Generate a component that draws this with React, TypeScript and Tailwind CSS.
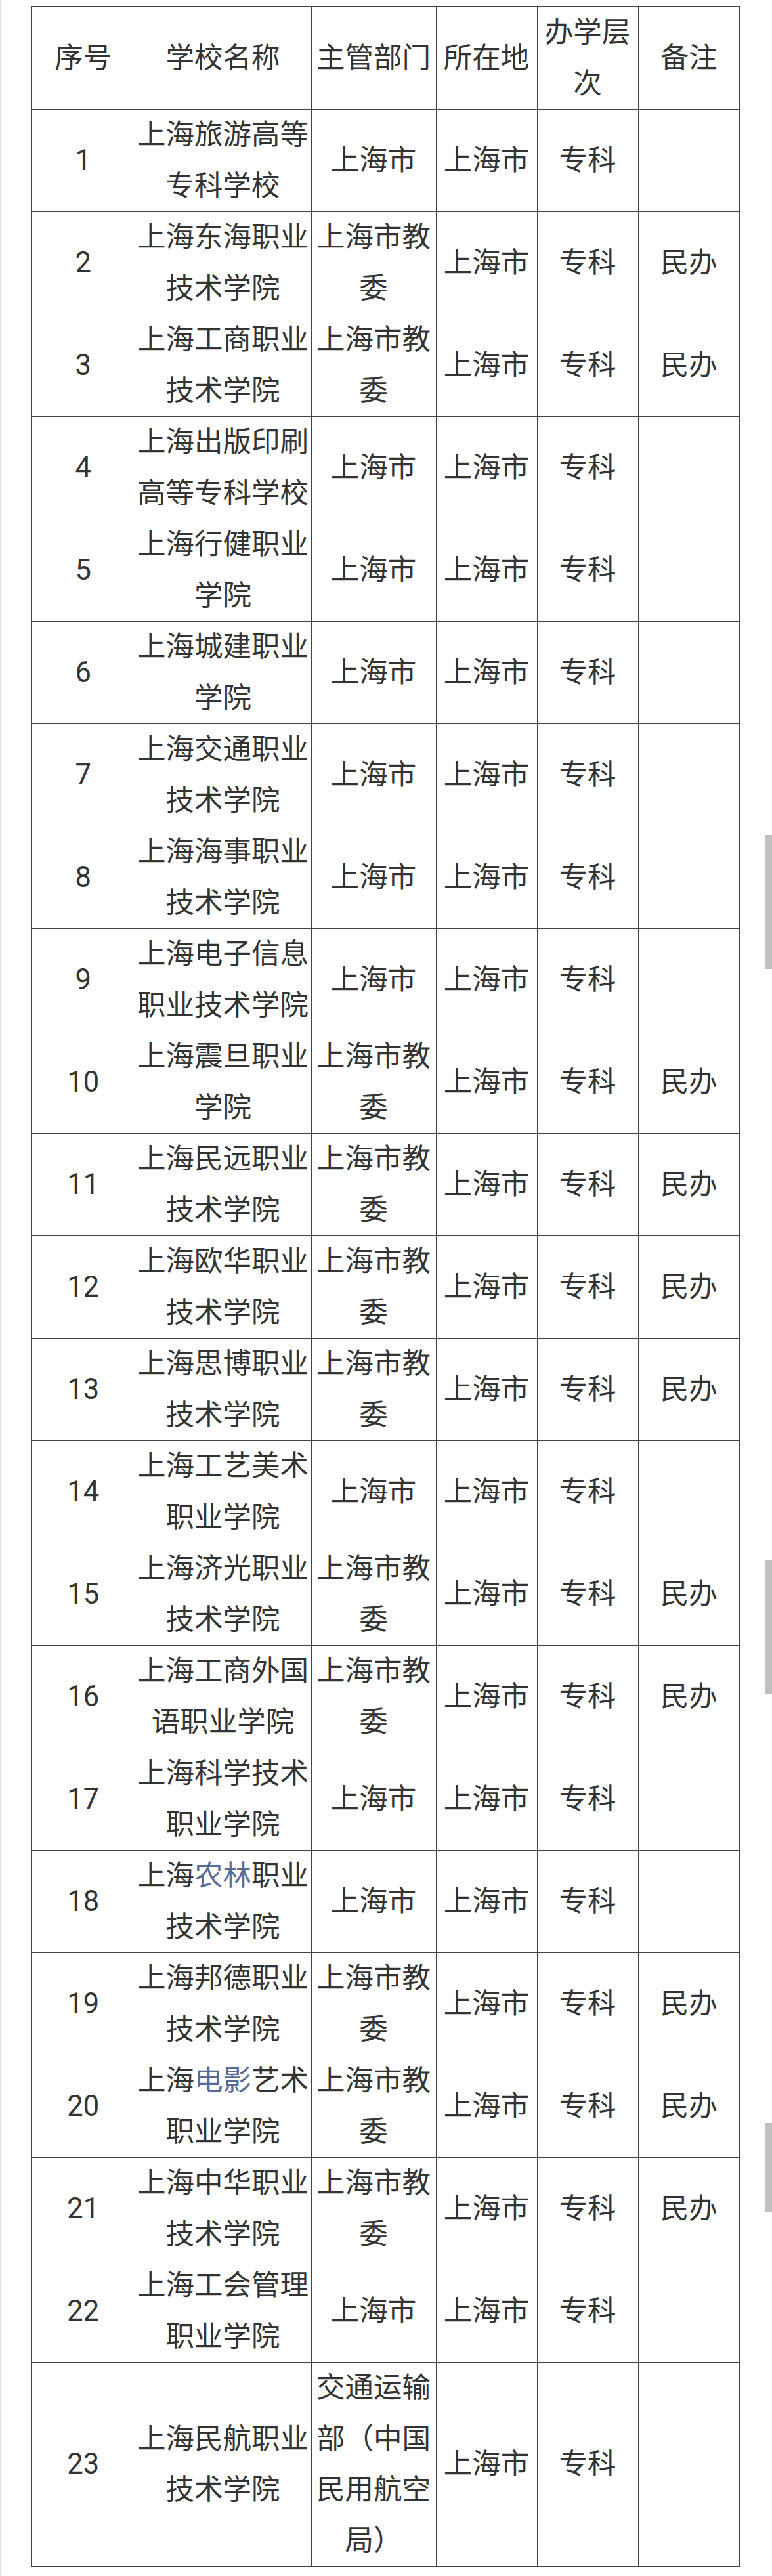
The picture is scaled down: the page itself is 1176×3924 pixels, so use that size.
type Seg = { t: string; link?: boolean }

type Row = {
  no: string
  name: Seg[]
  dept: string
  loc: string
  level: string
  note: string
}

const SH = "上海市"
const EDU = "上海市教委"

const rows: Row[] = [
  { no: "1", name: [{ t: "上海旅游高等专科学校" }], dept: SH, loc: SH, level: "专科", note: "" },
  { no: "2", name: [{ t: "上海东海职业技术学院" }], dept: EDU, loc: SH, level: "专科", note: "民办" },
  { no: "3", name: [{ t: "上海工商职业技术学院" }], dept: EDU, loc: SH, level: "专科", note: "民办" },
  { no: "4", name: [{ t: "上海出版印刷高等专科学校" }], dept: SH, loc: SH, level: "专科", note: "" },
  { no: "5", name: [{ t: "上海行健职业学院" }], dept: SH, loc: SH, level: "专科", note: "" },
  { no: "6", name: [{ t: "上海城建职业学院" }], dept: SH, loc: SH, level: "专科", note: "" },
  { no: "7", name: [{ t: "上海交通职业技术学院" }], dept: SH, loc: SH, level: "专科", note: "" },
  { no: "8", name: [{ t: "上海海事职业技术学院" }], dept: SH, loc: SH, level: "专科", note: "" },
  { no: "9", name: [{ t: "上海电子信息职业技术学院" }], dept: SH, loc: SH, level: "专科", note: "" },
  { no: "10", name: [{ t: "上海震旦职业学院" }], dept: EDU, loc: SH, level: "专科", note: "民办" },
  { no: "11", name: [{ t: "上海民远职业技术学院" }], dept: EDU, loc: SH, level: "专科", note: "民办" },
  { no: "12", name: [{ t: "上海欧华职业技术学院" }], dept: EDU, loc: SH, level: "专科", note: "民办" },
  { no: "13", name: [{ t: "上海思博职业技术学院" }], dept: EDU, loc: SH, level: "专科", note: "民办" },
  { no: "14", name: [{ t: "上海工艺美术职业学院" }], dept: SH, loc: SH, level: "专科", note: "" },
  { no: "15", name: [{ t: "上海济光职业技术学院" }], dept: EDU, loc: SH, level: "专科", note: "民办" },
  { no: "16", name: [{ t: "上海工商外国语职业学院" }], dept: EDU, loc: SH, level: "专科", note: "民办" },
  { no: "17", name: [{ t: "上海科学技术职业学院" }], dept: SH, loc: SH, level: "专科", note: "" },
  {
    no: "18",
    name: [{ t: "上海" }, { t: "农林", link: true }, { t: "职业技术学院" }],
    dept: SH,
    loc: SH,
    level: "专科",
    note: "",
  },
  { no: "19", name: [{ t: "上海邦德职业技术学院" }], dept: EDU, loc: SH, level: "专科", note: "民办" },
  {
    no: "20",
    name: [{ t: "上海" }, { t: "电影", link: true }, { t: "艺术职业学院" }],
    dept: EDU,
    loc: SH,
    level: "专科",
    note: "民办",
  },
  { no: "21", name: [{ t: "上海中华职业技术学院" }], dept: EDU, loc: SH, level: "专科", note: "民办" },
  { no: "22", name: [{ t: "上海工会管理职业学院" }], dept: SH, loc: SH, level: "专科", note: "" },
  {
    no: "23",
    name: [{ t: "上海民航职业技术学院" }],
    dept: "交通运输部（中国民用航空局）",
    loc: SH,
    level: "专科",
    note: "",
  },
]

const cell = "border border-[#444] px-[2px] py-0 text-center align-middle font-normal"

export default function App() {
  return (
    <div
      className="relative min-h-[3924px] bg-white border-l-2 border-[#e0e0e0] pl-[45px] pt-[9px] text-[#333] text-[43.5px] leading-[77.5px]"
      style={{ fontFamily: 'Roboto, "Noto Sans CJK SC", sans-serif' }}
    >
      <table className="table-fixed border-collapse border-2 border-[#444] w-[1081px]">
        <colgroup>
          <col className="w-[157px]" />
          <col className="w-[269px]" />
          <col className="w-[190px]" />
          <col className="w-[154px]" />
          <col className="w-[154px]" />
          <col className="w-[155px]" />
        </colgroup>
        <thead>
          <tr>
            <th className={cell}>序号</th>
            <th className={cell}>学校名称</th>
            <th className={cell}>主管部门</th>
            <th className={cell}>所在地</th>
            <th className={cell}>办学层次</th>
            <th className={cell}>备注</th>
          </tr>
        </thead>
        <tbody>
          {rows.map((r) => (
            <tr key={r.no}>
              <td className={cell}>{r.no}</td>
              <td className={cell}>
                {r.name.map((s, i) =>
                  s.link ? (
                    <span key={i} className="text-[#576b95]">
                      {s.t}
                    </span>
                  ) : (
                    <span key={i}>{s.t}</span>
                  )
                )}
              </td>
              <td className={cell}>{r.dept}</td>
              <td className={cell}>{r.loc}</td>
              <td className={cell}>{r.level}</td>
              <td className={cell}>{r.note}</td>
            </tr>
          ))}
        </tbody>
      </table>

      {/* fast-scroll thumbs on the right edge */}
      <div className="absolute right-0 top-[1272px] h-[204px] w-[11px] bg-[#c0c0c0]" />
      <div className="absolute right-0 top-[2376px] h-[204px] w-[11px] bg-[#c0c0c0]" />
      <div className="absolute right-0 top-[3234px] h-[136px] w-[11px] bg-[#c0c0c0]" />
    </div>
  )
}
